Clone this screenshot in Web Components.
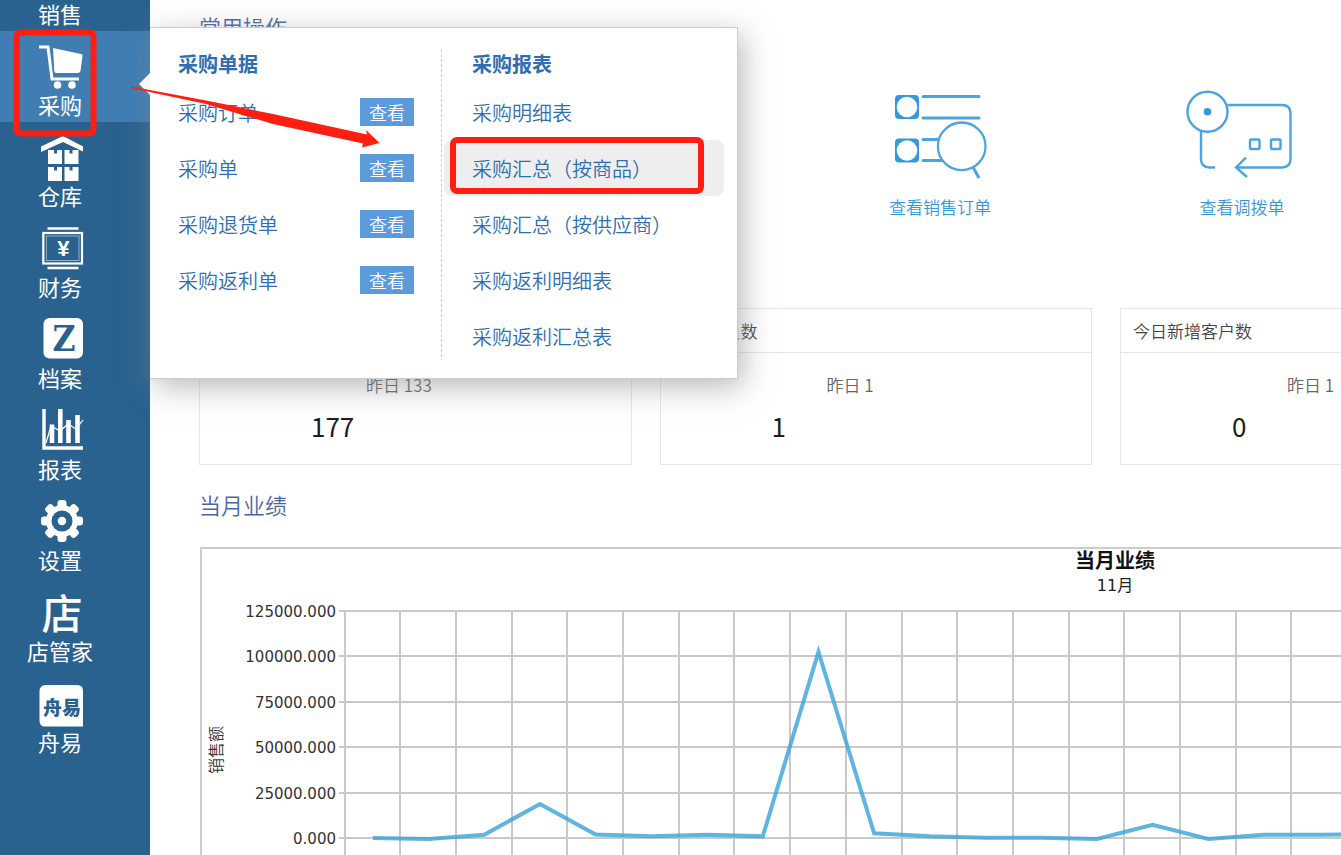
<!DOCTYPE html>
<html lang="zh-CN">
<head>
<meta charset="utf-8">
<title>采购管理</title>
<style>
html,body{margin:0;height:100%}
body{font-family:"Noto Sans CJK SC","Noto Sans",sans-serif;background:#fff;color:#333}
</style>
</head>
<body>
<erp-app></erp-app>
<script>
const define=(name,html)=>customElements.define(name,class extends HTMLElement{
  connectedCallback(){
    if(this.shadowRoot)return;
    this.attachShadow({mode:'open'}).innerHTML=typeof html==='function'?html(this):html;
  }
});

const navIcons={
cart:`<path d="M2 2h9l4 32h27" fill="none" stroke="#fff" stroke-width="3"/><path d="M16 3l28 6q2 0 1.500 2l-2 15q-.5 2-3 2H19q-1.500 0-1.700-2z" fill="#fff"/><circle cx="20.500" cy="40" r="3.800" fill="#fff"/><circle cx="35" cy="40" r="3.800" fill="#fff"/>`,
store:`<path d="M4 10.500L26 0l20 10.500v5L26 6 4 16z" fill="#fff"/><path d="M11 14h6v3.500h3V14h5v14H11zM27.500 14h5v3.500h3V14h6v14h-14zM11 31h6v3.500h3V31h5v14H11zM27.500 31h5v3.500h3V31h6v14h-14z" fill="#fff"/>`,
money:`<path d="M10.500 1.500h31M10.500 41h31" stroke="#fff" stroke-width="2.500"/><rect x="6.300" y="6" width="38.700" height="30.500" fill="none" stroke="#fff" stroke-width="2.200"/><rect x="9.300" y="9" width="32.700" height="24.500" fill="none" stroke="#a9c2d6" stroke-width=".8"/><text x="26.300" y="28.500" font-size="22" font-weight="700" font-family="Liberation Sans,sans-serif" text-anchor="middle" fill="#fff">¥</text>`,
file:`<rect x="6.500" width="39.500" height="40.500" rx="6" fill="#fff"/><text x="27" y="33" font-size="35" font-weight="700" font-family="DejaVu Serif Condensed,DejaVu Serif,serif" text-anchor="middle" fill="#2a628f">Z</text>`,
chart:`<path d="M7 0v39h39" fill="none" stroke="#fff" stroke-width="3.400"/><path d="M15 15.500V34M23.300 0v34M31.500 11v23M40.500 6v28" stroke="#fff" stroke-width="4.600"/><path d="M9 34l5-17 9 5 8-7 8 5 7-9" fill="none" stroke="#fff" stroke-width="1.200"/>`,
gear:`<g transform="translate(25 21)"><g fill="#fff"><circle r="16"/><g><rect x="-4.500" y="-21" width="9" height="42" rx="3"/><rect x="-21" y="-4.500" width="42" height="9" rx="3"/></g><g transform="rotate(45)"><rect x="-4.500" y="-21" width="9" height="42" rx="3"/><rect x="-21" y="-4.500" width="42" height="9" rx="3"/></g></g><circle r="10.500" fill="#2a628f"/><circle r="4.300" fill="#fff"/></g>`,
shop:`<text x="25" y="38" font-size="41" font-weight="500" text-anchor="middle" fill="#fff">店</text>`,
zhou:`<path d="M9 3h31q6 0 6 6v35.500H8q-5.500 0-5.500-6V9.500Q2.500 3 9 3z" fill="#fff"/><text x="25" y="32.500" font-size="19" font-weight="900" text-anchor="middle" fill="#2a628f">舟易</text>`
};

define('nav-item',el=>`<style>
:host{display:block;height:91px}
:host([tail]){height:31px}
a{display:flex;flex-direction:column;align-items:center;height:100%;box-sizing:border-box;padding:14px 30px 0 0;color:#fff;text-decoration:none}
:host([active]) a{background:#3f7db3}
:host([tail]) a{padding-top:0}
svg{display:block;width:46px;height:46px;flex:none;overflow:visible}
span{font-size:22px;line-height:26px;white-space:nowrap}
</style><a href="#">${el.hasAttribute('tail')?'':`<svg viewBox="0 0 46 46" aria-hidden="true">${navIcons[el.getAttribute('icon')]}</svg>`}<span><slot></slot></span></a>`);

define('side-nav',`<style>
:host{display:block;background:#2a628f}
</style><nav>
<nav-item tail>销售</nav-item>
<nav-item icon="cart" active>采购</nav-item>
<nav-item icon="store">仓库</nav-item>
<nav-item icon="money">财务</nav-item>
<nav-item icon="file">档案</nav-item>
<nav-item icon="chart">报表</nav-item>
<nav-item icon="gear">设置</nav-item>
<nav-item icon="shop">店管家</nav-item>
<nav-item icon="zhou">舟易</nav-item>
</nav>`);

define('menu-row',el=>`<style>
:host{display:flex;align-items:center;height:56px;box-sizing:border-box;padding-left:28px;border-radius:8px}
:host([hot]){background:#eee}
a{flex:1;color:#2f6eb0;font-size:20px;font-weight:350;line-height:30px;padding-top:2px;text-decoration:none;white-space:nowrap}
button{width:54px;height:28px;margin-right:27px;padding:0;border:0;background:#5b9bd9;color:#fff;font:350 18px/28px "Noto Sans CJK SC",sans-serif}
</style><a href="#"><slot></slot></a>${el.hasAttribute('view')?'<button type="button">查看</button>':''}`);

define('flyout-menu',`<style>
:host{display:grid;grid-template-columns:291px 1px 1fr;box-sizing:border-box;width:588px;padding:21px 0 14px;background:#fff;border:1px solid #ccc;border-left:0;box-shadow:5px 8px 28px rgba(140,140,140,.6)}
h2{margin:0 0 5px;padding-left:28px;color:#2f6eb0;font-size:20px;font-weight:700;line-height:30px}
.rule{margin-bottom:4px;background:repeating-linear-gradient(#ccc 0 3px,transparent 3px 5px)}
.right{padding:0 13px 0 2px}
.caret{position:absolute;left:-11px;top:45px;width:11px;height:22px;background:#f7f7f7;clip-path:polygon(100% 0,100% 100%,0 50%)}
</style>
<span class="caret"></span>
<section><h2>采购单据</h2>
<menu-row view>采购订单</menu-row><menu-row view>采购单</menu-row><menu-row view>采购退货单</menu-row><menu-row view>采购返利单</menu-row></section>
<div class="rule"></div>
<section class="right"><h2>采购报表</h2>
<menu-row>采购明细表</menu-row><menu-row hot>采购汇总（按商品）</menu-row><menu-row>采购汇总（按供应商）</menu-row><menu-row>采购返利明细表</menu-row><menu-row>采购返利汇总表</menu-row></section>`);

const actionIcons={
order:`<rect x="10" y="4" width="24" height="24" rx="4" fill="#3498db"/><circle cx="22" cy="16" r="10.300" fill="#fff"/><rect x="10" y="47.500" width="24" height="24" rx="4" fill="#3498db"/><circle cx="22" cy="59.500" r="10.300" fill="#fff"/><g fill="none" stroke="#4ba4df" stroke-linecap="round"><path d="M38 5.500h56M38 27h56M38 48.500h15M38 69.500h18" stroke-width="3"/><circle cx="76.700" cy="55.300" r="23.800" stroke-width="2.300"/><path d="M88.500 77l5.500 10" stroke-width="3" stroke-linecap="butt"/></g>`,
transfer:`<g fill="none" stroke="#4ba4df" stroke-width="2.400"><circle cx="20.500" cy="20.700" r="20"/><path d="M40.500 14H95q8.500 0 8.500 8.500V68q0 8.500-8.500 8.500H49M59 66.500L49 76.500l11 9.500M14 39.500V68q0 8.500 8.500 8.500H28"/><rect x="63" y="48.500" width="9.500" height="9.500" rx="1"/><rect x="84" y="48.500" width="9.500" height="9.500" rx="1"/></g><circle cx="20.500" cy="20.700" r="3.800" fill="#3498db"/>`
};
define('quick-action',el=>`<style>
:host{display:block}
a{display:flex;flex-direction:column;align-items:center;gap:14px;color:#3498db;text-decoration:none;font-size:17px;font-weight:350;line-height:28px}
svg{display:block;width:110px;height:88px;overflow:visible}
</style><a href="#"><svg viewBox="0 0 110 88" aria-hidden="true">${actionIcons[el.getAttribute('icon')]}</svg><span><slot></slot></span></a>`);

define('stat-card',`<style>
:host{display:block;box-sizing:border-box;border:1px solid #e6e6e6;font-size:17px}
header{height:43px;padding-left:12px;border-bottom:1px solid #e6e6e6;color:#444;font-weight:350;line-height:43px}
.past{margin:18px 0 0 166px;color:#666;font-weight:350;line-height:28px}
.now{margin:7px 0 18px 111px;color:#1d1d1d;font-size:26px;line-height:40px}
</style><header><slot name="title"></slot></header><div class="past"><slot name="past"></slot></div><div class="now"><slot></slot></div>`);

const X=k=>145+55.7*k, Y=v=>291-v/25000*45.4;
const sales=[0,-500,1800,18700,1900,1000,1800,900,102500,2600,900,200,200,-500,7200,-500,1800,1800,2200,2200,1800,1200,900,1500,2300,1100,900,700,500,400];
define('sales-chart',()=>{
  let g='',t='';
  for(let k=0;k<=30;k++)g+=`M${Math.floor(X(k))} 64V360`;
  for(let i=0;i<6;i++){const y=Math.round(Y(i*25000));g+=`M139 ${y}H${Math.round(X(30))}`;t+=`<text x="136" y="${y+6}" text-anchor="end">${(i*25000).toFixed(3)}</text>`}
  const pts=sales.map((v,i)=>`${X(i+.5)},${Y(v)}`).join(' ');
  return `<style>
:host{display:grid;box-sizing:border-box;border:2px solid #ccc;height:400px}
svg,.titles{grid-area:1/1}
svg{display:block;width:100%;height:100%;margin:-2px;overflow:visible;font:15px "DejaVu Sans",sans-serif;fill:#333}
.titles{text-align:center;color:#111}
h3{margin:0;font-size:20px;font-weight:700;line-height:22px}
p{margin:0;color:#222;font:16px/30px "DejaVu Sans","Noto Sans CJK SC",sans-serif}
.unit{font:350 16px "Noto Sans CJK SC",sans-serif}
</style><div class="titles"><h3>当月业绩</h3><p>11月</p></div>
<svg role="img" aria-label="当月业绩"><path d="${g}" fill="none" stroke="#bbb" stroke-opacity=".8" stroke-width="2"/>${t}
<text class="unit" transform="translate(22 203) rotate(-90)" text-anchor="middle">销售额</text>
<polyline points="${pts}" fill="none" stroke="#3aa5d8" stroke-opacity=".82" stroke-width="4"/></svg>`;
});

define('home-board',`<style>
:host{display:block;overflow:hidden}
.page{min-width:1830px;padding:10px 0 0 49px}
h1,h2{margin:0;color:#4a69a3;font-size:22px;font-weight:350;line-height:32px}
.actions{display:grid;grid-template-columns:repeat(5,302px);margin-left:-14px;padding:49px 0 87px}
.actions :first-child{grid-column-start:3}
.cards{display:grid;grid-template-columns:repeat(4,1fr);gap:28px;width:1814px;margin-bottom:23px}
sales-chart{margin:27px 0 0 1px;width:1830px}
</style><div class="page">
<h1>常用操作</h1>
<div class="actions"><quick-action icon="order">查看销售订单</quick-action><quick-action icon="transfer">查看调拨单</quick-action></div>
<div class="cards">
<stat-card><span slot="past">昨日 133</span>177</stat-card>
<stat-card><span slot="title">今日会员数</span><span slot="past">昨日 1</span>1</stat-card>
<stat-card><span slot="title">今日新增客户数</span><span slot="past">昨日 1</span>0</stat-card>
</div>
<h2>当月业绩</h2>
<sales-chart></sales-chart>
</div>`);

define('guide-marks',`<style>
:host{display:block;pointer-events:none}
svg{display:block;width:100%;height:100%}
</style><svg aria-hidden="true"><g fill="none" stroke="#ff1e10" stroke-width="6"><rect x="16.500" y="32.500" width="77" height="101" rx="4"/><rect x="453" y="140" width="248" height="51" rx="4"/></g><path d="M131 86.500L206 100.500 273 114 367 134.500 366 130 379.500 143 362 147.500 363 143.500 273 124 206 104 131 88z" fill="#ff1e10"/></svg>`);

define('erp-app',`<style>
:host{display:grid;grid-template-columns:150px minmax(0,1fr);position:relative;height:100vh;overflow:hidden}
flyout-menu{position:absolute;left:150px;top:27px}
guide-marks{position:absolute;inset:0}
</style><side-nav></side-nav><home-board></home-board><flyout-menu></flyout-menu><guide-marks></guide-marks>`);
</script>
</body>
</html>
